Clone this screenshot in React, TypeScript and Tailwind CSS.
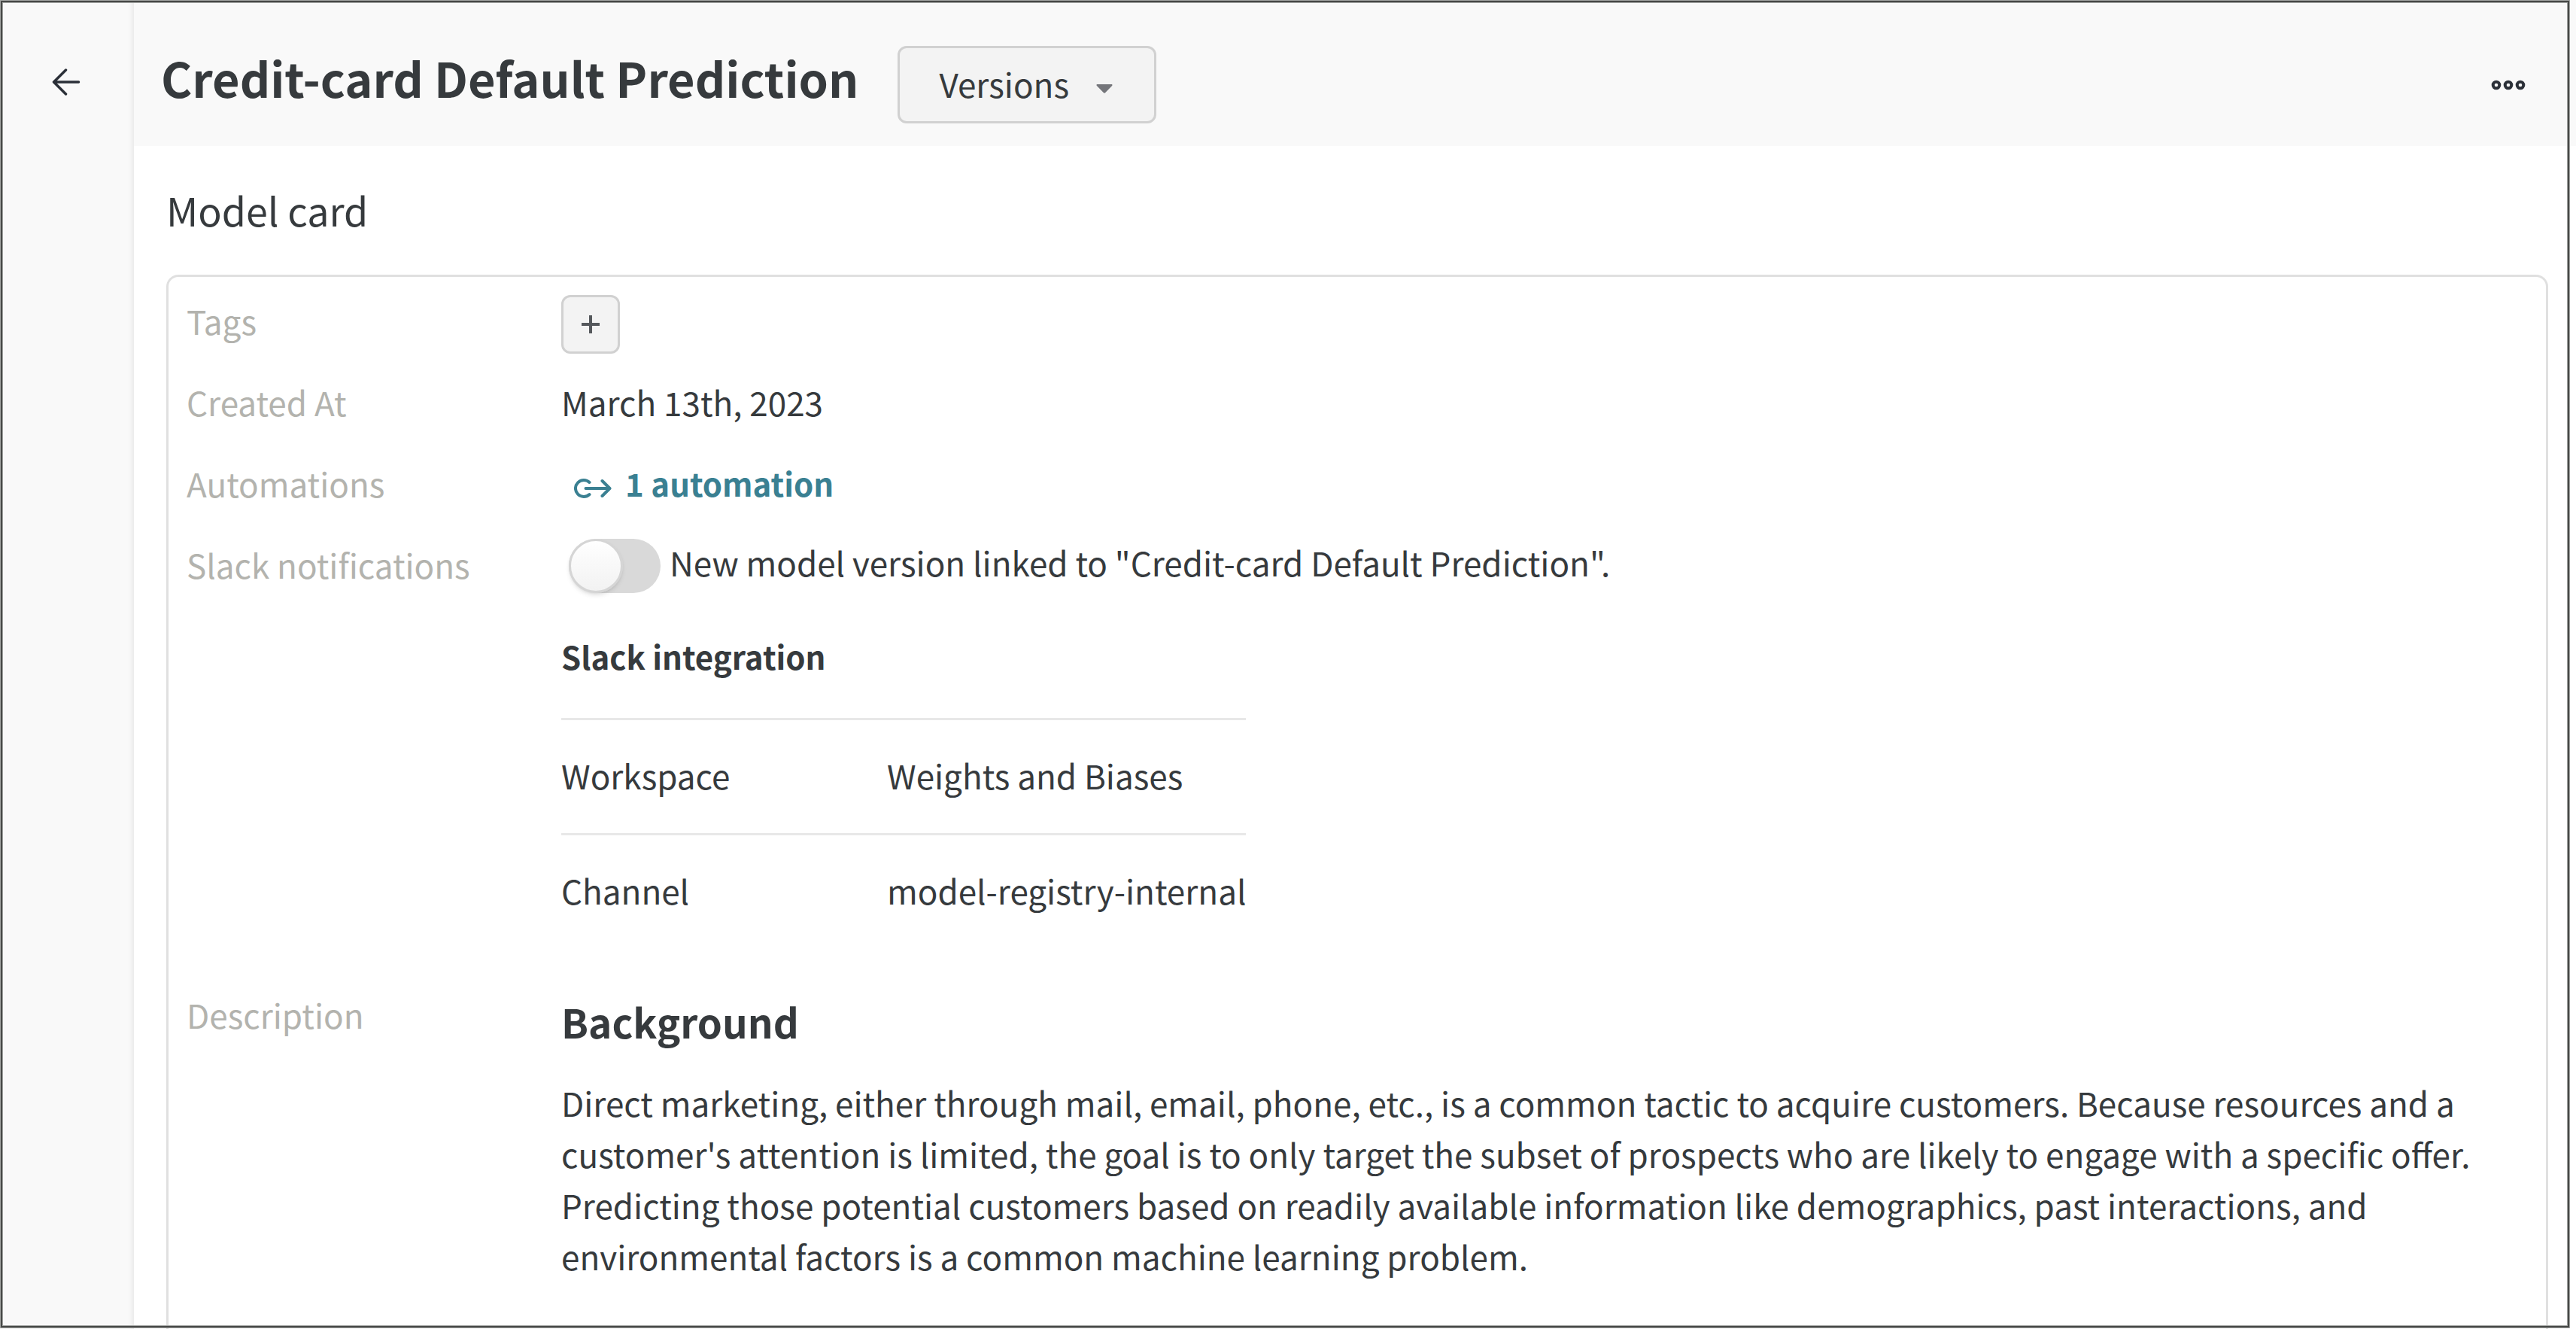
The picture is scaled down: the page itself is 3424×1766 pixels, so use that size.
const labelCell = 'w-[498px] shrink-0 text-[#b3b3ae]'

function BackArrow() {
  return (
    <svg width="38" height="36" viewBox="0 0 38 36" fill="none" stroke="#2b3038" strokeWidth="3.5" strokeLinecap="round" strokeLinejoin="round" aria-hidden="true">
      <path d="M35.500 18H3M18.500 2 2.500 18l16 16" />
    </svg>
  )
}

function Dots() {
  return (
    <svg width="46" height="14" viewBox="0 0 46 14" fill="none" stroke="#2b3038" strokeWidth="4" aria-hidden="true">
      <circle cx="7" cy="7" r="4.300" />
      <circle cx="23" cy="7" r="4.300" />
      <circle cx="39" cy="7" r="4.300" />
    </svg>
  )
}

function AutomationIcon() {
  return (
    <svg className="mt-[14px]" width="50" height="26" viewBox="0 0 50 26" fill="none" stroke="#3a8092" strokeWidth="4" strokeLinecap="round" strokeLinejoin="round" aria-hidden="true">
      <path d="M20.500 5A11 11 0 1 0 20.500 21M15.500 13H47M37.500 3 47.500 13 37.500 23" />
    </svg>
  )
}

export default function App() {
  return (
    <div className='relative flex h-screen overflow-hidden bg-white font-["Noto_Sans_CJK_SC",sans-serif] text-[44px] leading-[68px] text-[#363a3d]'>
      <nav className="flex w-[178px] shrink-0 flex-col items-center bg-[#f9f9f9] pt-[91px] pr-0.5 shadow-[inset_-1px_0_0_#ececec,inset_-8px_0_8px_-8px_rgba(0,0,0,0.12)]">
        <button type="button" aria-label="Back" className="block">
          <BackArrow />
        </button>
      </nav>
      <div className="flex min-w-0 grow flex-col">
        <header className="flex h-[194px] shrink-0 items-center bg-[#f9f9f9] pr-[67px] pl-[36px]">
          <h1 className="mt-[11px] text-[63px] leading-[80px] font-bold">Credit-card Default Prediction</h1>
          <button type="button" className="mt-[31px] ml-[52px] flex h-[103px] items-center gap-9 rounded-xl border-3 border-[#d1d1d1] bg-[#f3f3f3] pr-[55px] pl-13">
            <span className="pb-[3px]">Versions</span>
            <svg className="mt-2.5" width="22" height="12" viewBox="0 0 22 12" fill="#74757a" aria-hidden="true">
              <path d="M1.500 0h19c1 0 1.300 1.200.600 1.900L12.300 11a1.800 1.800 0 0 1-2.600 0L.900 1.900C.200 1.200.500 0 1.500 0z" />
            </svg>
          </button>
          <button type="button" aria-label="More actions" className="mt-8 ml-auto block">
            <Dots />
          </button>
        </header>
        <main className="flex min-h-0 grow flex-col pr-[37px] pl-[43px]">
          <h2 className="pt-[46px] pb-[47px] text-[52px] leading-[78px]">Model card</h2>
          <section className="grow rounded-t-2xl border-3 border-b-0 border-[#e0e0e0] pt-6 pr-8 pl-6">
            <div className="flex pb-[30px]">
              <span className={labelCell}>Tags</span>
              <button type="button" aria-label="Add tag" className="flex size-[78px] items-center justify-center rounded-xl border-3 border-[#d1d1d1] bg-[#f3f3f3]">
                <svg width="24" height="24" viewBox="0 0 24 24" stroke="#55585c" strokeWidth="4" aria-hidden="true">
                  <path d="M12 0v24M0 12h24" />
                </svg>
              </button>
            </div>
            <div className="flex pb-10">
              <span className={labelCell}>Created At</span>
              <span>March 13th, 2023</span>
            </div>
            <div className="flex pb-10">
              <span className={labelCell}>Automations</span>
              <a href="#automations" className="ml-[17px] flex items-center gap-[18px] text-[42px] font-bold text-[#3a8092]">
                <AutomationIcon />1 automation
              </a>
            </div>
            <div className="flex pb-[54px]">
              <span className={labelCell}>Slack notifications</span>
              <div>
                <label className="flex items-start">
                  <input type="checkbox" role="switch" className="sr-only" />
                  <span className="ml-[10px] flex h-[72px] w-[122px] rounded-full bg-[#d9d9d9]">
                    <span className="size-[72px] rounded-full border-3 border-[#d5d5d5] bg-linear-to-b from-white to-[#f2f2f2] shadow-md" />
                  </span>
                  <span className="ml-3 leading-[62px]">New model version linked to "Credit-card Default Prediction".</span>
                </label>
                <h3 className="mt-[50px] text-[42px] font-bold">Slack integration</h3>
                <table className="mt-[48px] border-collapse text-left">
                  <tbody>
                    <tr className="border-t-3 border-[#e8e8e8]">
                      <th scope="row" className="w-[433px] pt-[39px] pb-[43px] font-normal">Workspace</th>
                      <td className="pt-[39px] pb-[43px]">Weights and Biases</td>
                    </tr>
                    <tr className="border-t-3 border-[#e8e8e8]">
                      <th scope="row" className="pt-[39px] pb-[43px] font-normal">Channel</th>
                      <td className="pt-[39px] pb-[43px]">model-registry-internal</td>
                    </tr>
                  </tbody>
                </table>
              </div>
            </div>
            <div className="flex">
              <span className={labelCell}>Description</span>
              <div className="max-w-[2560px]">
                <h3 className="text-[53px] leading-[86px] font-bold">Background</h3>
                <p className="mt-[31px]">
                  Direct marketing, either through mail, email, phone, etc., is a common tactic to acquire customers. Because resources and a
                  customer's attention is limited, the goal is to only target the subset of prospects who are likely to engage with a specific offer.
                  Predicting those potential customers based on readily available information like demographics, past interactions, and
                  environmental factors is a common machine learning problem.
                </p>
              </div>
            </div>
          </section>
        </main>
      </div>
      <div className="pointer-events-none absolute top-px right-[9px] bottom-[2px] left-px border-2 border-[#474947] shadow-[0_0_0_1px_#a3a5a3,inset_0_0_0_1px_#a3a5a3]" />
    </div>
  )
}
